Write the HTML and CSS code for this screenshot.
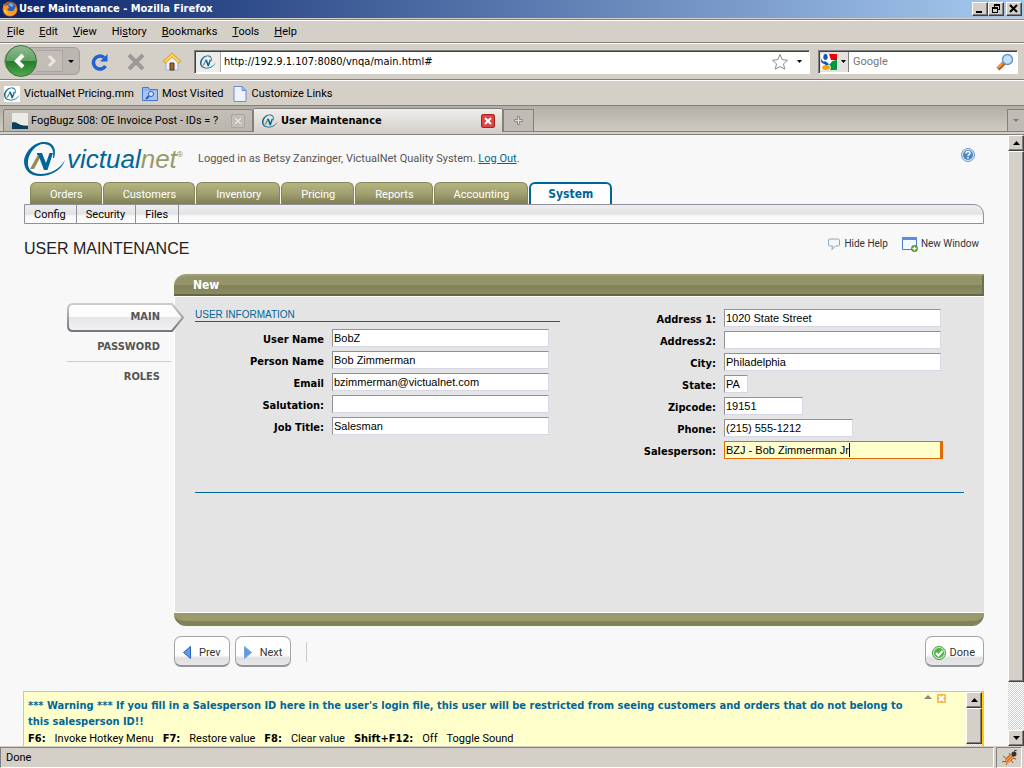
FILE: index.html
```html
<!DOCTYPE html>
<html lang="en">
<head>
  <meta charset="UTF-8" />
  <meta name="viewport" content="width=device-width, initial-scale=1.0"/>
  <title>User Maintenance - Mozilla Firefox</title>
  <link rel="stylesheet" href="styles.css">
</head>
<body>
  <!-- shared emblem -->
  <svg class="defs" width="0" height="0" aria-hidden="true">
    <symbol id="emblem" viewBox="0 0 42 36">
      <path d="M30 17C33 8 29 1 21 1 11 0 1 10 0 20 0 29 6 35 16 35 27 35 38 29 41 19 36 28 26 33 17 33 8 33 3 28 4 20 5 11 13 2.500 20 3 28 3.500 30 9 29 17z" fill="#006699"/>
      <path d="M6 28h4l7-13-3-1.500z" fill="#8f8f5a"/>
      <path d="M13 12h5l4 10L25.500 12H29l-5.500 17H20l-4.500-12c-.5-2-1-3-2.500-3.500z" fill="#006699"/>
    </symbol>
  </svg>

  <div class="titlebar">
    <svg width="16" height="16" viewBox="0 0 16 16">
      <circle cx="8" cy="8" r="7.500" fill="#e66000"/>
      <circle cx="8.500" cy="6" r="4.800" fill="#2c5fb8"/>
      <path d="M6 3l3-1 3 2-2 2-2-1z" fill="#6fb2ea"/>
      <path d="M1 3l2 2 3-1 1 3-2 1 2 2h3c2 0 3-2 3-4l2 2c0 4-3 7-7 7-5 0-8-4-6-12z" fill="#ff9a1f"/>
      <path d="M2 9c1 4 5 5 8 4-4 0-6-2-7-5z" fill="#ffd24a"/>
    </svg>
    <span class="titlebar-text">User Maintenance - Mozilla Firefox</span>
    <div class="window-buttons">
      <button aria-label="Minimize"><svg width="12" height="10" viewBox="0 0 12 10"><path d="M2 7h6v2H2z"/></svg></button>
      <button aria-label="Restore"><svg width="12" height="10" viewBox="0 0 12 10"><path d="M4 0h6v6H8v3H2V3h2zM5 2v1h3v2h1V2zM3 5v3h4V5z" fill-rule="evenodd"/></svg></button>
      <button aria-label="Close" class="close"><svg width="12" height="10" viewBox="0 0 12 10"><path d="M2 1l7 7M9 1l-7 7" stroke="#000" stroke-width="2"/></svg></button>
    </div>
  </div>

  <nav class="menubar">
    <a href="#"><u>F</u>ile</a>
    <a href="#"><u>E</u>dit</a>
    <a href="#"><u>V</u>iew</a>
    <a href="#">Hi<u>s</u>tory</a>
    <a href="#"><u>B</u>ookmarks</a>
    <a href="#"><u>T</u>ools</a>
    <a href="#"><u>H</u>elp</a>
  </nav>

  <div class="toolbar">
    <div class="history-buttons">
      <button class="back" aria-label="Back"><svg width="32" height="32" viewBox="0 0 32 32"><path d="M18 10l-6 6 6 6" fill="none" stroke="#fff" stroke-width="4"/></svg></button>
      <button class="forward" aria-label="Forward"><svg width="24" height="20" viewBox="0 0 24 20"><path d="M11 5l5 5-5 5" fill="none" stroke="#e8e6e2" stroke-width="3"/></svg></button>
      <button class="plain" aria-label="Recent pages"><svg width="8" height="5" viewBox="0 0 8 5"><path d="M1 1h6L4 4z"/></svg></button>
    </div>
    <button class="plain" aria-label="Reload"><svg width="18" height="18" viewBox="0 0 18 18"><path d="M14.500 13A6.500 6.500 0 1 1 13 4.500" fill="none" stroke="#1e62d4" stroke-width="3.500"/><path d="M16.500 1v7.500H9z" fill="#1e62d4"/></svg></button>
    <button class="plain" aria-label="Stop"><svg width="18" height="18" viewBox="0 0 18 18"><path d="M2 2l14 14M16 2L2 16" stroke="#9c9a96" stroke-width="4"/></svg></button>
    <button class="plain" aria-label="Home"><svg width="18" height="18" viewBox="0 0 18 18"><path d="M3 9v8h12V9L9 3z" fill="#eef2fa" stroke="#9fb0d4"/><path d="M7 10h4v7H7z" fill="#a4662c" stroke="#5c3412"/><path d="M1 9.500L9 2l8 7.500" fill="none" stroke="#d99a10" stroke-width="3.500"/><path d="M1.500 9L9 2l7.500 7" fill="none" stroke="#ffd75a" stroke-width="2"/></svg></button>
    <div class="urlbar sunken">
      <span class="site-icon"><svg width="16" height="16"><use href="#emblem"/></svg></span>
      <input type="text" aria-label="Address" value="http://192.9.1.107:8080/vnqa/main.html#">
      <svg width="18" height="18" viewBox="0 0 18 18"><path d="M9 1.500l2.200 5.200 5.300.5-4 3.600 1.200 5.400L9 13.500l-4.700 2.700 1.200-5.400-4-3.600 5.300-.5z" fill="#fff" stroke="#8a8a8a"/></svg>
      <button class="plain" aria-label="Show history"><svg width="6" height="4" viewBox="0 0 6 4"><path d="M0 0h5L2.500 3z"/></svg></button>
    </div>
    <div class="searchbar sunken">
      <button class="engine" aria-label="Search engine">
        <svg width="16" height="16" viewBox="0 0 16 16"><path d="M0 0h16v16H0z" fill="#fff"/><path d="M8 0h8v6H10z" fill="#e8000b"/><path d="M16 6v10H9c2-3 0-4-1-6 3 0 1-4 8-4z" fill="#009a3d"/><path d="M0 3c0 3 2 5 5 5l1 2C2 10 0 9 0 7z" fill="#1353c4"/><ellipse cx="4.500" cy="3" rx="2.200" ry="3" fill="#1353c4"/><path d="M4 7l4 3-2 2-4-3z" fill="#1353c4"/><ellipse cx="5" cy="13.500" rx="4" ry="2.500" fill="#f6a800"/></svg>
        <svg width="6" height="4" viewBox="0 0 6 4"><path d="M0 0h5L2.500 3z"/></svg>
      </button>
      <input type="text" aria-label="Search" placeholder="Google">
      <svg width="18" height="18" viewBox="0 0 18 18"><path d="M2 16l6-6" stroke="#a8531a" stroke-width="4"/><path d="M2 15l5-5" stroke="#f29a4a" stroke-width="2"/><circle cx="11.500" cy="6.500" r="5" fill="#bfe3fb" stroke="#6b94c4" stroke-width="1.500"/></svg>
    </div>
  </div>

  <div class="bookmarks">
    <a href="#"><svg width="16" height="16"><rect width="16" height="16" fill="#fff"/><use href="#emblem"/></svg>VictualNet Pricing.mm</a>
    <a href="#"><svg width="16" height="16" viewBox="0 0 16 16"><path d="M.5 14.500v-13h6l1 2h8v11z" fill="#8fb8f4" stroke="#4878d0"/><path d="M1 14V5h14v9z" fill="#a4c4f8"/><circle cx="9" cy="8" r="2.500" fill="#d8e8ff" stroke="#2c5cb8"/><path d="M7 10l-3 3" stroke="#2c5cb8" stroke-width="2"/></svg>Most Visited</a>
    <a href="#"><svg width="16" height="16" viewBox="0 0 16 16"><path d="M2 .5h8l4 4v11H2z" fill="#eef3ff" stroke="#6a8cd8"/><path d="M10 .5v4h4z" fill="#b8ccf6" stroke="#6a8cd8"/></svg>Customize Links</a>
  </div>

  <div class="tabstrip">
    <div class="browser-tab">
      <svg width="16" height="16" viewBox="0 0 16 16"><path d="M0 0h16v16H0z" fill="#e8ebe6"/><path d="M0 9c5-2 6 4 16 3v4H0z" fill="#0d3f5c"/><path d="M0 9c5-2 6 4 16 3" fill="none" stroke="#fff"/></svg>
      <span>FogBugz 508: OE Invoice Post - IDs = ?</span>
      <button class="tab-close" aria-label="Close tab"><svg width="8" height="8" viewBox="0 0 8 8"><path d="M1 1l6 6M7 1L1 7" stroke="#a09c96" stroke-width="3"/><path d="M1 1l6 6M7 1L1 7" stroke="#e4e2de" stroke-width="2"/></svg></button>
    </div>
    <div class="browser-tab current">
      <svg width="16" height="16"><use href="#emblem"/></svg>
      <span>User Maintenance</span>
      <button class="tab-close" aria-label="Close tab"><svg width="8" height="8" viewBox="0 0 8 8"><path d="M1 1l6 6M7 1L1 7" stroke="#fff" stroke-width="2"/></svg></button>
    </div>
    <button class="new-tab" aria-label="New tab"><svg width="9" height="9" viewBox="0 0 9 9"><path d="M3.500.5h2v3h3v2h-3v3h-2v-3h-3v-2h3z" fill="#ddd" stroke="#8a8a8a"/></svg></button>
    <button class="all-tabs" aria-label="List all tabs"><svg width="6" height="4" viewBox="0 0 6 4"><path d="M0 0h6L3 3z" fill="#777"/></svg></button>
  </div>

  <div class="viewport">
    <div class="page">
      <header class="site-header">
        <div class="logo">
          <svg width="42" height="36"><use href="#emblem"/></svg>
          <span class="wordmark">victual<em>net</em></span><span class="reg">®</span>
        </div>
        <p class="login">Logged in as Betsy Zanzinger, VictualNet Quality System. <a href="#">Log Out</a>.</p>
        <button class="plain help" aria-label="Help"><svg width="14" height="14" viewBox="0 0 14 14"><circle cx="7" cy="7" r="6.500" fill="#d5e4f5" stroke="#6b9bd0"/><circle cx="7" cy="7" r="5" fill="#4f86c2"/><path d="M5 5.500C5 3 9 3 9 5.200 9 6.500 7 6.500 7 8" fill="none" stroke="#fff" stroke-width="1.500"/><path d="M6.200 9h1.600v1.600H6.200z" fill="#fff"/></svg></button>
      </header>

      <nav class="tabs">
        <a href="#">Orders</a>
        <a href="#">Customers</a>
        <a href="#">Inventory</a>
        <a href="#">Pricing</a>
        <a href="#">Reports</a>
        <a href="#">Accounting</a>
        <a href="#" class="active">System</a>
      </nav>
      <nav class="subtabs">
        <a href="#">Config</a>
        <a href="#">Security</a>
        <a href="#">Files</a>
      </nav>

      <div class="heading">
        <h1>USER MAINTENANCE</h1>
        <div class="page-tools">
          <a href="#"><svg width="14" height="13" viewBox="0 0 14 13"><path d="M2.500 1h9l1 1v5l-1 1H8.500l-3.500 3.500.5-3.500h-3l-1-1V2z" fill="#f2f6fb" stroke="#93a5b8"/></svg>Hide Help</a>
          <a href="#"><svg width="16" height="15" viewBox="0 0 16 15"><path d="M.5.5h14v12H.5z" fill="#f4faff" stroke="#4b7dc4"/><path d="M0 0h15v3H0z" fill="#5b8ed8"/><circle cx="12.500" cy="11.500" r="3.400" fill="#4f9a2a"/><path d="M12.500 9.500v4M10.500 11.500h4" stroke="#fff" stroke-width="1.400"/></svg>New Window</a>
        </div>
      </div>

      <div class="workspace">
        <nav class="side">
          <a href="#" class="selected">
            <svg class="side-shape" viewBox="0 0 118 30" preserveAspectRatio="none">
              <defs>
                <linearGradient id="sideFill" x1="0" y1="0" x2="0" y2="1"><stop offset="0" stop-color="#fff"/><stop offset=".5" stop-color="#fbfbfb"/><stop offset=".5" stop-color="#e6e6e6"/><stop offset="1" stop-color="#f2f2f2"/></linearGradient>
                <linearGradient id="sideEdge" x1="0" y1="0" x2="0" y2="1"><stop offset="0" stop-color="#ccc"/><stop offset="1" stop-color="#777480"/></linearGradient>
              </defs>
              <path d="M6 2h99l11 13.500L105 29H6q-5 0-5-5V7q0-5 5-5z" fill="url(#sideFill)" stroke="url(#sideEdge)" stroke-width="2"/>
            </svg>
            <span>MAIN</span>
          </a>
          <a href="#">PASSWORD</a>
          <a href="#">ROLES</a>
        </nav>

        <section class="panel">
          <h2>New</h2>
          <form class="panel-body">
            <div class="columns">
              <div class="column">
                <h3>USER INFORMATION</h3>
                <div class="fields">
                  <label for="user-name">User Name</label><input type="text" id="user-name" value="BobZ">
                  <label for="person-name">Person Name</label><input type="text" id="person-name" value="Bob Zimmerman">
                  <label for="email">Email</label><input type="text" id="email" value="bzimmerman@victualnet.com">
                  <label for="salutation">Salutation:</label><input type="text" id="salutation">
                  <label for="job-title">Job Title:</label><input type="text" id="job-title" value="Salesman">
                </div>
              </div>
              <div class="column">
                <div class="fields">
                  <label for="address1">Address 1:</label><input type="text" id="address1" value="1020 State Street">
                  <label for="address2">Address2:</label><input type="text" id="address2">
                  <label for="city">City:</label><input type="text" id="city" value="Philadelphia">
                  <label for="state">State:</label><input type="text" id="state" class="w-state" value="PA">
                  <label for="zipcode">Zipcode:</label><input type="text" id="zipcode" class="w-zip" value="19151">
                  <label for="phone">Phone:</label><input type="text" id="phone" class="w-phone" value="(215) 555-1212">
                  <label for="salesperson">Salesperson:</label>
                  <div class="focus-box"><input type="text" id="salesperson" class="focused" value="BZJ - Bob Zimmerman Jr"><span class="caret"></span></div>
                </div>
              </div>
            </div>
            <hr>
          </form>
          <div class="panel-foot"></div>
          <div class="actions">
            <button class="action"><svg width="8" height="13" viewBox="0 0 8 13"><path d="M7.500.5v12L.5 6.500z" fill="#5b9bea" stroke="#2c62b4"/></svg>Prev</button>
            <button class="action"><svg width="8" height="13" viewBox="0 0 8 13"><path d="M.5.5v12l7-6z" fill="#5b9bea" stroke="#7aa4dc"/></svg>Next</button>
            <span class="divider"></span>
            <button class="action done"><svg width="14" height="14" viewBox="0 0 14 14"><circle cx="7" cy="7" r="6.500" fill="#d2efcc" stroke="#3f9a36"/><circle cx="7" cy="7" r="5" fill="#55b348"/><path d="M4 7l2.500 2.500L10.500 5" fill="none" stroke="#fff" stroke-width="2"/></svg>Done</button>
          </div>
        </section>
      </div>

      <aside class="warning">
        <div class="warning-text">
          <p class="message">*** Warning *** If you fill in a Salesperson ID here in the user's login file, this user will be restricted from seeing customers and orders that do not belong to this salesperson ID!!</p>
          <p class="hotkeys"><b>F6:</b><span>Invoke Hotkey Menu</span><b>F7:</b><span>Restore value</span><b>F8:</b><span>Clear value</span><b>Shift+F12:</b><span>Off</span><span>Toggle Sound</span></p>
        </div>
        <div class="warning-tools">
          <button class="plain" aria-label="Collapse"><svg width="8" height="6" viewBox="0 0 8 6"><path d="M0 5l4-4 4 4z" fill="#888"/></svg></button>
          <button class="plain" aria-label="Close warning"><svg width="9" height="9" viewBox="0 0 9 9"><rect width="9" height="9" rx="1" fill="#f9b84a"/><path d="M2 2l5 5M7 2L2 7" stroke="#fff" stroke-width="2"/></svg></button>
        </div>
        <div class="scrollbar">
          <button aria-label="Scroll warning up"><svg width="7" height="4" viewBox="0 0 7 4"><path d="M0 4h7L3.500 0z"/></svg></button>
          <div class="thumb small"></div>
        </div>
      </aside>
    </div>

    <div class="scrollbar">
      <button aria-label="Scroll up"><svg width="7" height="4" viewBox="0 0 7 4"><path d="M0 4h7L3.500 0z"/></svg></button>
      <div class="thumb"></div>
      <div class="track"></div>
      <button aria-label="Scroll down"><svg width="7" height="4" viewBox="0 0 7 4"><path d="M0 0h7L3.500 4z"/></svg></button>
    </div>
  </div>

  <footer class="statusbar">
    <span class="status">Done</span>
    <span class="firebug"><svg width="18" height="16" viewBox="0 0 18 16"><path d="M2 6l4 3M1 12l5-1M5 15l2-3M8 3l2 3M12 13l-2-3M15 9l-4-1" stroke="#8a5a30"/><ellipse cx="8.500" cy="8.500" rx="3" ry="5.500" transform="rotate(45 8.500 8.500)" fill="#d8702a"/><path d="M5 11l6-6M6 13l6-6" stroke="#f2b070"/><circle cx="13" cy="4" r="2.500" fill="#333"/><path d="M13 1l3-1" stroke="#333"/></svg></span>
  </footer>
</body>
</html>
```
FILE: styles.css
```css
* {
  box-sizing: border-box;
}
body {
  margin: 0;
  height: 100vh;
  display: flex;
  flex-direction: column;
  overflow: hidden;
  background: #d4d0c8;
  color: #000;
  font-family: Tahoma, Roboto, sans-serif;
  font-size: 11px;
  line-height: 14px;
}
.titlebar, .current, .urlbar, .message, b, label, .side, .active, h2 {
  font-family: Tahoma, "DejaVu Sans Condensed", "DejaVu Sans", sans-serif;
}
input, button {
  font: inherit;
  color: inherit;
}
input {
  min-width: 0;
  border: 0;
  outline: 0;
  padding: 0;
}
button {
  display: flex;
  align-items: center;
  justify-content: center;
  padding: 0;
}
a {
  color: inherit;
  text-decoration: none;
}
svg {
  flex: none;
  display: block;
}
h1, h2, h3, p {
  margin: 0;
}
.defs {
  position: absolute;
}
.plain {
  border: 0;
  background: none;
}

/* Title bar */
.titlebar {
  display: flex;
  align-items: center;
  gap: 1px;
  height: 18px;
  padding: 0 2px;
  background: linear-gradient(to right, #0a246a, #a6caf0);
  color: #fff;
  font-weight: bold;
  flex: none;
}
.titlebar-text {
  flex: 1;
}
.window-buttons {
  display: flex;
}
.window-buttons button {
  width: 16px;
  height: 14px;
}
.window-buttons .close {
  margin-left: 2px;
}
.window-buttons button, .scrollbar button, .thumb {
  background: #d4d0c8;
  border: 1px solid;
  border-color: #fff #404040 #404040 #fff;
  box-shadow: inset -1px -1px #808080;
}

/* Menus and toolbars */
.menubar {
  display: flex;
  gap: 15px;
  align-items: center;
  height: 24px;
  margin-top: 1px;
  padding: 1px 7px 0;
  border-top: 1px solid #808080;
  border-bottom: 1px solid #808080;
  box-shadow: inset 0 1px #fff;
  flex: none;
}
.toolbar {
  display: flex;
  align-items: center;
  gap: 18px;
  height: 37px;
  padding: 0 6px 0 4px;
  border-top: 1px solid #fff;
  border-bottom: 1px solid #808080;
  flex: none;
}
.history-buttons {
  display: flex;
  align-items: center;
  width: 76px;
  height: 28px;
  margin: -1px -7px 0 0;
  background: #bbb7b0;
  border: 1px solid #a39f98;
  border-radius: 14px 6px 6px 14px;
}
.history-buttons .back {
  width: 32px;
  height: 32px;
  margin: -2px 0;
  border: 1px solid #3f7040;
  border-radius: 50%;
  background: linear-gradient(#8fbb90, #5fa162 50%, #267a2a 50%, #4fa84f);
}
.history-buttons .forward {
  width: 26px;
  height: 22px;
  border: 1px solid #aaa69f;
  border-left: 0;
  background: #c2beb7;
}
.history-buttons .plain {
  flex: 1;
}
.sunken {
  display: flex;
  align-items: center;
  height: 24px;
  background: #fff;
  border: 1px solid;
  border-color: #808080 #fff #fff #808080;
  box-shadow: inset 1px 1px #404040;
}
.sunken input {
  flex: 1;
  background: transparent;
}
.urlbar {
  flex: 1;
  margin-left: -5px;
  padding-right: 6px;
  gap: 8px;
}
.site-icon {
  display: flex;
  align-items: center;
  justify-content: center;
  width: 25px;
  height: 20px;
  margin: 1px -5px 0 1px;
  background: #eeece8;
  border-right: 1px solid #aaa;
}
.searchbar {
  width: 200px;
  margin-left: -10px;
  padding-right: 3px;
  gap: 4px;
}
.engine {
  gap: 4px;
  width: 29px;
  height: 20px;
  margin: 1px 0 0 1px;
  border: 0;
  border-right: 1px solid #808080;
  background: #e4e2de;
}
.searchbar input::placeholder {
  color: #777;
}
.bookmarks {
  display: flex;
  align-items: center;
  gap: 8px;
  height: 26px;
  padding: 1px 4px 0;
  border-top: 1px solid #fff;
  border-bottom: 1px solid #808080;
  flex: none;
}
.bookmarks a {
  display: flex;
  align-items: center;
  gap: 4px;
}

/* Browser tabs */
.tabstrip {
  display: flex;
  align-items: flex-end;
  height: 29px;
  padding-left: 3px;
  border-bottom: 1px solid #808080;
  background: linear-gradient(#b2aea6, #cfcbc3 25px, #808080 25px, #808080 26px, #d4d0c8 26px);
  flex: none;
}
.browser-tab {
  display: flex;
  align-items: center;
  gap: 3px;
  width: 250px;
  height: 23px;
  margin-bottom: 2px;
  padding: 1px 7px 0 8px;
  border: 1px solid #808080;
  border-radius: 2px 2px 0 0;
  background: linear-gradient(#c4c0b9, #bab6ae);
}
.browser-tab span {
  flex: 1;
  white-space: nowrap;
  overflow: hidden;
}
.browser-tab.current {
  height: 24px;
  border-bottom: 0;
  background: linear-gradient(#f0efec, #d4d0c8);
  font-weight: bold;
}
.tab-close {
  width: 14px;
  height: 14px;
  border: 1px solid #aaa69f;
  border-radius: 2px;
  background: #c4c0b9;
}
.current .tab-close {
  border-color: #a82020;
  background: #dd4444;
}
.new-tab {
  width: 31px;
  height: 23px;
  margin-bottom: 2px;
  border: 1px solid #808080;
  background: #c0bcb5;
}
.all-tabs {
  width: 17px;
  height: 23px;
  margin: 0 0 2px auto;
  border: 1px solid #808080;
  border-right: 0;
  background: #c0bcb5;
}

/* Page area */
.viewport {
  flex: 1;
  display: flex;
  min-height: 0;
}
.page {
  flex: 1;
  min-width: 0;
  padding: 0 24px;
  background: #f8f8f8;
  overflow: hidden;
}
.scrollbar {
  display: flex;
  flex-direction: column;
  width: 16px;
  background: repeating-conic-gradient(#fff 0 25%, #d4d0c8 0 50%) 0 0 / 2px 2px;
}
.scrollbar button {
  height: 16px;
  flex: none;
}
.thumb {
  flex: 11;
}
.track {
  flex: 1;
}
.thumb.small {
  flex: none;
  height: 36px;
}
.site-header {
  display: flex;
  align-items: center;
  height: 47px;
}
.logo {
  display: flex;
  align-items: center;
  width: 174px;
}
.wordmark {
  margin-left: 1px;
  color: #006699;
  font: italic 26px/30px "Liberation Sans", Arial, sans-serif;
}
.wordmark em {
  color: #9a9a66;
}
.reg {
  align-self: flex-start;
  margin-top: 7px;
  color: #9a9a66;
  font-size: 8px;
}
.login {
  flex: 1;
  color: #555;
}
.login a {
  color: #006699;
  text-decoration: underline;
}
.help {
  margin: -8px 9px 0 0;
}

/* Main tabs */
.tabs {
  display: flex;
  gap: 1px;
  padding-left: 6px;
}
.tabs a {
  height: 22px;
  padding: 0 18px 0 19px;
  border: 1px solid #86865c;
  border-bottom: 0;
  border-radius: 6px 6px 0 0;
  background: linear-gradient(#b5b582, #a0a070 50%, #7e7e54);
  color: #fff;
  line-height: 23px;
}
.tabs a.active {
  padding: 0 17px;
  border: 2px solid #006699;
  border-bottom: 0;
  background: #fff;
  color: #006699;
  font-size: 12px;
  font-weight: bold;
  line-height: 21px;
}
.subtabs {
  display: flex;
  height: 20px;
  border: 1px solid #909098;
  border-radius: 0 10px 0 0;
  background: linear-gradient(#eeeef0, #e2e2e4 50%, #f8f8f8 60%, #fcfcfc);
}
.subtabs a {
  padding: 0 10px 0 9px;
  border-right: 1px solid #909098;
  line-height: 19px;
}
.heading {
  display: flex;
  justify-content: space-between;
  height: 50px;
  padding-top: 13px;
}
.heading h1 {
  color: #222;
  font: 16px/24px "Liberation Sans", Arial, sans-serif;
}
.page-tools {
  display: flex;
  gap: 14px;
  padding-right: 5px;
  color: #333;
  font-size: 10px;
}
.page-tools a {
  display: flex;
  align-items: center;
  gap: 3px;
  height: 14px;
}

/* Side menu */
.workspace {
  display: flex;
}
.side {
  width: 150px;
  flex: none;
  padding: 28px 3px 0 43px;
}
.side a {
  display: block;
  height: 30px;
  padding-right: 11px;
  color: #555;
  font-weight: bold;
  line-height: 30px;
  text-align: right;
}
.side a + a {
  border-bottom: 1px solid #ccc;
}
.side a:last-child {
  border-bottom: 0;
}
.side a.selected {
  position: relative;
  z-index: 1;
}
.side-shape {
  position: absolute;
  top: 0;
  left: 0;
  width: 118px;
  height: 30px;
}
.side a span {
  position: relative;
}

/* Panel */
.panel {
  flex: 1;
  min-width: 0;
}
.panel h2 {
  height: 22px;
  padding-left: 19px;
  border-top: 2px solid #a0a078;
  border-bottom: 2px solid #66663f;
  border-right: 2px solid #70704a;
  border-radius: 12px 0 0 0;
  background: linear-gradient(#94946a 50%, #80805a 50%, #8c8c62);
  color: #fff;
  font-size: 12px;
  line-height: 18px;
}
.panel-body {
  min-height: 317px;
  padding: 12px 20px 0 20px;
  border: 1px solid #fff;
  border-right: 0;
  background: #e4e4e4;
}
.columns {
  display: grid;
  grid-template-columns: 365fr 404fr;
}
.panel h3 {
  margin-bottom: 7px;
  border-bottom: 1px solid #006699;
  color: #006699;
  font: 10px/12px "Liberation Sans", Arial, sans-serif;
}
.fields {
  display: grid;
  grid-template-columns: 129px 217px;
  column-gap: 8px;
  row-gap: 4px;
}
.column + .column .fields {
  grid-template-columns: 156px 219px;
}
.fields label {
  height: 18px;
  font-weight: bold;
  line-height: 21px;
  text-align: right;
}
.fields input {
  width: 217px;
  height: 18px;
  padding: 0 1px 1px;
  border: 1px solid;
  border-color: #909098 #d8d8e4 #d8d8e4 #909098;
  background: #fff;
  font: 11px/14px "Liberation Sans", Arial, sans-serif;
}
.fields .w-state {
  width: 24px;
}
.fields .w-zip {
  width: 79px;
}
.fields .w-phone {
  width: 129px;
}
.fields .focused {
  display: block;
  width: 219px;
  border-color: #e06c00;
  border-right-width: 3px;
  background: #ffffcc;
  caret-color: transparent;
}
.focus-box {
  position: relative;
}
.caret {
  position: absolute;
  top: 2px;
  left: 125px;
  width: 1px;
  height: 14px;
  background: #000;
}
.panel hr {
  margin: 33px 0 0;
  border: 0;
  border-top: 1px solid #006699;
}
.panel-foot {
  height: 13px;
  border-bottom: 5px solid #82825a;
  border-radius: 0 0 12px 12px;
  background: #9a9a6c;
}

/* Buttons below the panel */
.actions {
  display: flex;
  align-items: center;
  gap: 5px;
  margin-top: 10px;
}
.action {
  gap: 8px;
  height: 31px;
  padding: 3px 8px 0;
  border: 1px solid #a4a4ac;
  border-bottom: 2px solid #94949c;
  border-radius: 7px;
  background: linear-gradient(#fff 65%, #e0e0e2 75%, #e8e8ea);
  color: #333;
}
.action.done {
  gap: 4px;
  margin-left: auto;
  padding: 3px 8px 0 6px;
}
.divider {
  width: 1px;
  height: 20px;
  margin-left: 10px;
  background: #ccc;
}

/* Warning box */
.warning {
  display: flex;
  height: 72px;
  margin: 24px 0 0 -1px;
  border: 1px solid #ffcc00;
  border-right-width: 2px;
  background: #ffffcc;
}
.warning-text {
  flex: 1;
  padding: 6px 0 0 4px;
}
.message {
  color: #006699;
  font-weight: bold;
  line-height: 16px;
}
.hotkeys {
  display: flex;
  gap: 9px;
  line-height: 18px;
}
.warning-tools {
  display: flex;
  align-items: flex-start;
  gap: 5px;
  width: 42px;
  padding-top: 2px;
}

/* Status bar */
.statusbar {
  display: flex;
  height: 21px;
  margin-top: 1px;
  flex: none;
}
.status, .firebug {
  border: 1px solid;
  border-color: #808080 #fff #fff #808080;
}
.status {
  flex: 1;
  padding: 3px 5px;
}
.firebug {
  display: flex;
  align-items: center;
  width: 26px;
  margin: 0 2px;
  padding-left: 4px;
}
```
